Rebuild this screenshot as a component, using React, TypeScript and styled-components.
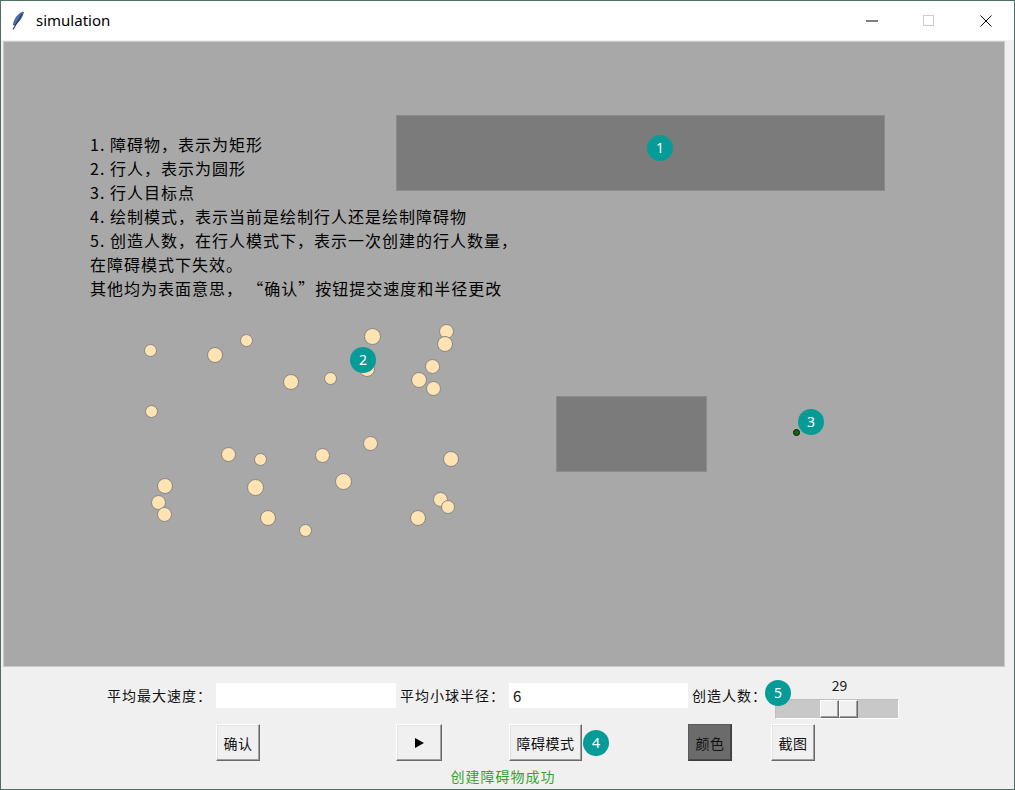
import React from "react";
import styled, { createGlobalStyle } from "styled-components";

const Global = createGlobalStyle`
  html, body { margin: 0; padding: 0; background: #f0f0f0; }
  body { font-family: "Noto Sans CJK SC", "Noto Sans", sans-serif; }
  * { box-sizing: border-box; }
`;

const CJK = `"Noto Sans CJK SC", "Noto Sans", sans-serif`;

const Window = styled.div`
  position: relative;
  width: 1015px;
  height: 790px;
  border: 1px solid #4d6f65;
  background: #f0f0f0;
  display: flex;
  flex-direction: column;
  overflow: hidden;
`;

const TitleBar = styled.div`
  height: 39px;
  background: #ffffff;
  display: flex;
  align-items: center;
  flex-shrink: 0;
`;

const AppIcon = styled.div`
  width: 35px;
  display: flex;
  justify-content: center;
  padding-right: 2px;
`;

const Title = styled.div`
  font-family: "Segoe UI", "Noto Sans", "Liberation Sans", sans-serif;
  font-size: 15px;
  color: #000;
  flex: 1;
  padding-bottom: 1px;
`;

const WinButton = styled.div`
  width: 57px;
  height: 39px;
  display: flex;
  align-items: center;
  justify-content: center;
`;

const Body = styled.div`
  flex: 1;
  padding: 1px 2px 0 2px;
  display: flex;
  flex-direction: column;
`;

const Canvas = styled.div`
  position: relative;
  width: 1002px;
  height: 626px;
  background: #a8a8a8;
  border: 1px solid #c9c9c9;
  flex-shrink: 0;
  overflow: hidden;
`;

const Obstacle = styled.div<{ $x: number; $y: number; $w: number; $h: number }>`
  position: absolute;
  left: ${(p) => p.$x}px;
  top: ${(p) => p.$y}px;
  width: ${(p) => p.$w}px;
  height: ${(p) => p.$h}px;
  background: #7b7b7b;
  border: 1px solid #8b8b8b;
`;

const Legend = styled.div`
  position: absolute;
  left: 86px;
  top: 90px;
  font-family: ${CJK};
  font-size: 16px;
  line-height: 24px;
  letter-spacing: 1px;
  color: #000000;
  white-space: pre;
`;

const Walker = styled.div<{ $x: number; $y: number; $d: number }>`
  position: absolute;
  left: ${(p) => p.$x - p.$d / 2}px;
  top: ${(p) => p.$y - p.$d / 2}px;
  width: ${(p) => p.$d}px;
  height: ${(p) => p.$d}px;
  border-radius: 50%;
  background: #ffe3b3;
  border: 1px solid #868686;
`;

const Target = styled.div<{ $x: number; $y: number }>`
  position: absolute;
  left: ${(p) => p.$x - 3}px;
  top: ${(p) => p.$y - 3}px;
  width: 7px;
  height: 7px;
  border-radius: 50%;
  background: #0a6b0a;
  border: 1px solid #111;
`;

const Controls = styled.div`
  display: grid;
  grid-template-columns: 113px 180px 113px 179px 83px 132px;
  grid-template-rows: 46px 41px auto;
  margin-left: 100px;
  padding-top: 9px;
  font-family: ${CJK};
  font-size: 14px;
  color: #111111;
`;

const FieldLabel = styled.div<{ $end?: boolean }>`
  align-self: start;
  justify-self: ${(p) => (p.$end ? "end" : "start")};
  margin-top: 9px;
  padding: 0 4px;
  line-height: 20px;
  letter-spacing: 1px;
  white-space: nowrap;
`;

const Entry = styled.div`
  align-self: start;
  margin-top: 7px;
  height: 25px;
  background: #ffffff;
  padding: 0 4px;
  line-height: 25px;
  font-size: 15px;
  color: #111;
`;

const SliderBox = styled.div`
  position: relative;
  margin-left: 4px;
  width: 124px;
  height: 44px;
`;

const SliderValue = styled.div`
  position: absolute;
  top: 0;
  width: 30px;
  margin-left: -15px;
  text-align: center;
  font-size: 14px;
  line-height: 18px;
  color: #1a1a1a;
`;

const Trough = styled.div`
  position: absolute;
  left: 0;
  top: 23px;
  width: 124px;
  height: 20px;
  background: #c8c8c8;
  border: 1px solid;
  border-color: #c0c0c0 #ffffff #ffffff #c0c0c0;
`;

const ThumbHalf = styled.div`
  position: absolute;
  top: 0;
  width: 19px;
  height: 18px;
  background: #f0f0f0;
  border: 1px solid;
  border-color: #ffffff #696969 #696969 #ffffff;
  box-shadow: inset -1px -1px #a0a0a0;
`;

const Button = styled.button<{ $dark?: boolean; $w: number }>`
  align-self: start;
  justify-self: start;
  margin-top: 2px;
  width: ${(p) => p.$w}px;
  height: 37px;
  padding: 0;
  font-family: ${CJK};
  font-size: 14px;
  letter-spacing: 0.5px;
  color: #111111;
  background: ${(p) => (p.$dark ? "#6b6b6b" : "#f0f0f0")};
  border: 1px solid;
  border-color: ${(p) =>
    p.$dark ? "#5a5a5a #3c3c3c #3c3c3c #5a5a5a" : "#ffffff #696969 #696969 #ffffff"};
  box-shadow: ${(p) =>
    p.$dark ? "inset -1px -1px #4a4a4a" : "inset -1px -1px #a0a0a0, inset 1px 1px #e3e3e3"};
  display: flex;
  align-items: center;
  justify-content: center;
`;

const Status = styled.div`
  grid-column: 1 / -1;
  justify-self: center;
  margin-top: 3px;
  font-size: 14px;
  line-height: 20px;
  letter-spacing: 1px;
  color: #30a52e;
`;

const Badge = styled.div<{ $x: number; $y: number }>`
  position: absolute;
  left: ${(p) => p.$x - 13}px;
  top: ${(p) => p.$y - 13}px;
  width: 26px;
  height: 26px;
  border-radius: 50%;
  background: #079b98;
  color: #ffffff;
  font-family: "Noto Sans", "Liberation Sans", sans-serif;
  font-size: 14px;
  line-height: 26px;
  text-align: center;
`;

// canvas interior origin in page coordinates
const OX = 4;
const OY = 42;

const walkers: [number, number, number][] = [
  [150, 350, 13], [215, 355, 16], [246, 340, 13], [372, 336, 17], [446, 331, 15],
  [445, 344, 16], [367, 369, 16], [432, 366, 15], [419, 380, 16], [433, 388, 15],
  [291, 382, 16], [330, 378, 13], [151, 411, 13], [228, 454, 15], [260, 459, 13],
  [322, 455, 15], [370, 443, 15], [451, 459, 16], [165, 486, 16], [255, 487, 17],
  [343, 481, 17], [158, 502, 15], [164, 514, 15], [268, 518, 16], [305, 530, 13],
  [440, 499, 15], [448, 507, 14], [418, 518, 16],
];

const legend = [
  "1. 障碍物，表示为矩形",
  "2. 行人，表示为圆形",
  "3. 行人目标点",
  "4. 绘制模式，表示当前是绘制行人还是绘制障碍物",
  "5. 创造人数，在行人模式下，表示一次创建的行人数量，",
  "在障碍模式下失效。",
  "其他均为表面意思，\u2009“确认”按钮提交速度和半径更改",
].join("\n");

const sliderValue = 29;
const sliderMin = 1;
const sliderMax = 50;
const thumbCenter = 4 + ((sliderValue - sliderMin) / (sliderMax - sliderMin)) * (124 - 46) + 19;

function Feather() {
  return (
    <svg width="14" height="20" viewBox="0 0 14 20">
      <path d="M12.5 1 C 7 2.5, 3 8, 2.5 14 L 4 14 C 8 11, 11.5 6, 12.5 1 Z" fill="#4a74b8" stroke="#2b4a80" strokeWidth="0.8" />
      <path d="M11 3 L 2 18.5" stroke="#2d3b52" strokeWidth="1.2" />
    </svg>
  );
}

export default function App() {
  return (
    <>
      <Global />
      <Window>
        <TitleBar>
          <AppIcon>
            <Feather />
          </AppIcon>
          <Title>simulation</Title>
          <WinButton>
            <svg width="12" height="2" viewBox="0 0 12 2">
              <line x1="0" y1="1" x2="12" y2="1" stroke="#000" strokeWidth="1" />
            </svg>
          </WinButton>
          <WinButton>
            <svg width="11" height="11" viewBox="0 0 11 11">
              <rect x="0.5" y="0.5" width="10" height="10" fill="none" stroke="#cccccc" strokeWidth="1" />
            </svg>
          </WinButton>
          <WinButton>
            <svg width="12" height="12" viewBox="0 0 12 12">
              <path d="M0.5 0.5 L11.5 11.5 M11.5 0.5 L0.5 11.5" stroke="#000" strokeWidth="1" />
            </svg>
          </WinButton>
        </TitleBar>
        <Body>
          <Canvas>
            <Obstacle $x={392} $y={73} $w={489} $h={76} />
            <Obstacle $x={552} $y={354} $w={151} $h={76} />
            <Legend>{legend}</Legend>
            {walkers.map(([x, y, d], i) => (
              <Walker key={i} $x={x - OX} $y={y - OY} $d={d} />
            ))}
            <Target $x={796 - OX} $y={432 - OY} />
          </Canvas>
          <Controls>
            <FieldLabel $end>平均最大速度：</FieldLabel>
            <Entry />
            <FieldLabel>平均小球半径：</FieldLabel>
            <Entry>6</Entry>
            <FieldLabel>创造人数：</FieldLabel>
            <SliderBox>
              <SliderValue style={{ left: thumbCenter - 4 + 1 }}>{sliderValue}</SliderValue>
              <Trough>
                <ThumbHalf style={{ left: thumbCenter - 4 - 19 - 1 }} />
                <ThumbHalf style={{ left: thumbCenter - 4 - 1 }} />
              </Trough>
            </SliderBox>

            <div />
            <Button $w={44}>确认</Button>
            <Button $w={46}>
              <svg width="9" height="10" viewBox="0 0 9 10">
                <polygon points="0,0 9,5 0,10" fill="#000" />
              </svg>
            </Button>
            <Button $w={73}>障碍模式</Button>
            <Button $w={44} $dark>颜色</Button>
            <Button $w={44}>截图</Button>

            <Status>创建障碍物成功</Status>
          </Controls>
        </Body>
        <Badge $x={659} $y={147}>1</Badge>
        <Badge $x={362} $y={359}>2</Badge>
        <Badge $x={810} $y={421}>3</Badge>
        <Badge $x={595} $y={742}>4</Badge>
        <Badge $x={777} $y={692}>5</Badge>
      </Window>
    </>
  );
}
